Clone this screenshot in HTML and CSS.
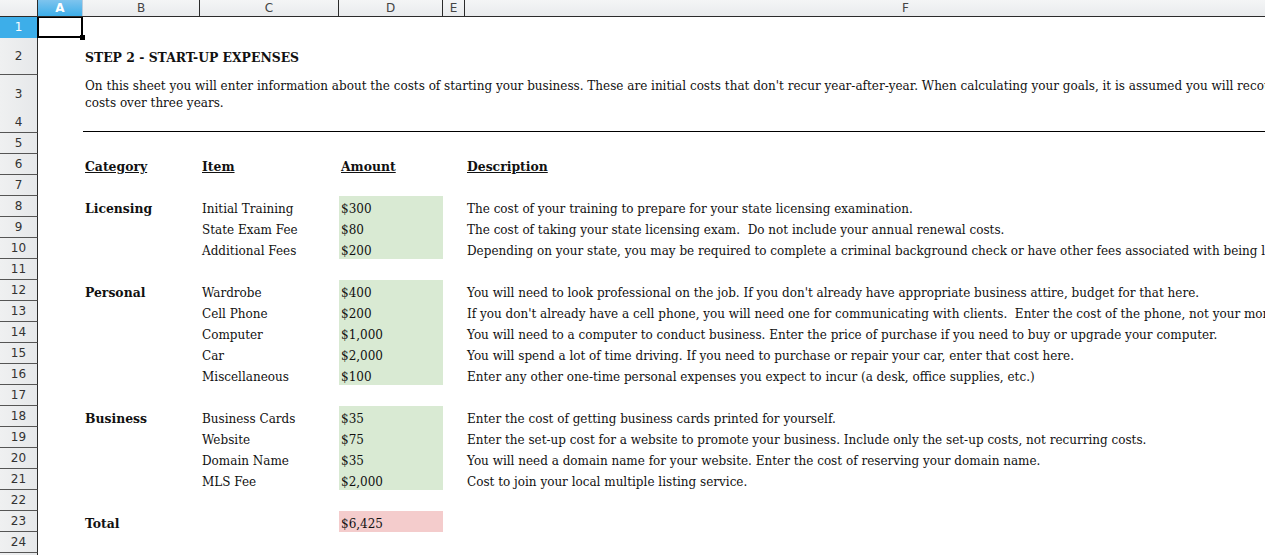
FILE: index.html
```html
<!DOCTYPE html>
<html lang="en">
<head>
    <meta charset="UTF-8">
    <title>Step 2 - Start-up Expenses</title>
    <link rel="stylesheet" href="styles.css">
</head>
<body>
    <div class="sheet">
        <div class="row col-heads">
            <div class="corner"></div>
            <div class="col-head selected">A</div>
            <div class="col-head">B</div>
            <div class="col-head">C</div>
            <div class="col-head">D</div>
            <div class="col-head">E</div>
            <div class="col-head left">F</div>
        </div>

        <div class="row">
            <div class="row-head selected">1</div>
            <div class="cell active"><span class="handle"></span></div>
        </div>

        <div class="row tall">
            <div class="row-head">2</div>
            <div class="cell"></div>
            <div class="cell span title">STEP 2 - START-UP EXPENSES</div>
        </div>

        <div class="row tall">
            <div class="row-head">3</div>
            <div class="cell"></div>
            <div class="cell span intro">On this sheet you will enter information about the costs of starting your business. These are initial costs that don't recur year-after-year. When calculating your goals, it is assumed you will recoup these<br>costs over three years.</div>
        </div>

        <div class="row">
            <div class="row-head">4</div>
            <div class="cell"></div>
            <div class="cell span rule"></div>
        </div>

        <div class="row"><div class="row-head">5</div></div>

        <div class="row">
            <div class="row-head">6</div>
            <div class="cell"></div>
            <div class="cell heading">Category</div>
            <div class="cell heading">Item</div>
            <div class="cell heading">Amount</div>
            <div class="cell"></div>
            <div class="cell heading">Description</div>
        </div>

        <div class="row"><div class="row-head">7</div></div>

        <div class="row">
            <div class="row-head">8</div>
            <div class="cell"></div>
            <div class="cell cat">Licensing</div>
            <div class="cell">Initial Training</div>
            <div class="cell amount">$300</div>
            <div class="cell"></div>
            <div class="cell">The cost of your training to prepare for your state licensing examination.</div>
        </div>
        <div class="row">
            <div class="row-head">9</div>
            <div class="cell"></div>
            <div class="cell"></div>
            <div class="cell">State Exam Fee</div>
            <div class="cell amount">$80</div>
            <div class="cell"></div>
            <div class="cell">The cost of taking your state licensing exam.&nbsp; Do not include your annual renewal costs.</div>
        </div>
        <div class="row">
            <div class="row-head">10</div>
            <div class="cell"></div>
            <div class="cell"></div>
            <div class="cell">Additional Fees</div>
            <div class="cell amount">$200</div>
            <div class="cell"></div>
            <div class="cell">Depending on your state, you may be required to complete a criminal background check or have other fees associated with being licensed.</div>
        </div>

        <div class="row"><div class="row-head">11</div></div>

        <div class="row">
            <div class="row-head">12</div>
            <div class="cell"></div>
            <div class="cell cat">Personal</div>
            <div class="cell">Wardrobe</div>
            <div class="cell amount">$400</div>
            <div class="cell"></div>
            <div class="cell">You will need to look professional on the job. If you don't already have appropriate business attire, budget for that here.</div>
        </div>
        <div class="row">
            <div class="row-head">13</div>
            <div class="cell"></div>
            <div class="cell"></div>
            <div class="cell">Cell Phone</div>
            <div class="cell amount">$200</div>
            <div class="cell"></div>
            <div class="cell">If you don't already have a cell phone, you will need one for communicating with clients.&nbsp; Enter the cost of the phone, not your monthly bill.</div>
        </div>
        <div class="row">
            <div class="row-head">14</div>
            <div class="cell"></div>
            <div class="cell"></div>
            <div class="cell">Computer</div>
            <div class="cell amount">$1,000</div>
            <div class="cell"></div>
            <div class="cell">You will need to a computer to conduct business. Enter the price of purchase if you need to buy or upgrade your computer.</div>
        </div>
        <div class="row">
            <div class="row-head">15</div>
            <div class="cell"></div>
            <div class="cell"></div>
            <div class="cell">Car</div>
            <div class="cell amount">$2,000</div>
            <div class="cell"></div>
            <div class="cell">You will spend a lot of time driving. If you need to purchase or repair your car, enter that cost here.</div>
        </div>
        <div class="row">
            <div class="row-head">16</div>
            <div class="cell"></div>
            <div class="cell"></div>
            <div class="cell">Miscellaneous</div>
            <div class="cell amount">$100</div>
            <div class="cell"></div>
            <div class="cell">Enter any other one-time personal expenses you expect to incur (a desk, office supplies, etc.)</div>
        </div>

        <div class="row"><div class="row-head">17</div></div>

        <div class="row">
            <div class="row-head">18</div>
            <div class="cell"></div>
            <div class="cell cat">Business</div>
            <div class="cell">Business Cards</div>
            <div class="cell amount">$35</div>
            <div class="cell"></div>
            <div class="cell">Enter the cost of getting business cards printed for yourself.</div>
        </div>
        <div class="row">
            <div class="row-head">19</div>
            <div class="cell"></div>
            <div class="cell"></div>
            <div class="cell">Website</div>
            <div class="cell amount">$75</div>
            <div class="cell"></div>
            <div class="cell">Enter the set-up cost for a website to promote your business. Include only the set-up costs, not recurring costs.</div>
        </div>
        <div class="row">
            <div class="row-head">20</div>
            <div class="cell"></div>
            <div class="cell"></div>
            <div class="cell">Domain Name</div>
            <div class="cell amount">$35</div>
            <div class="cell"></div>
            <div class="cell">You will need a domain name for your website. Enter the cost of reserving your domain name.</div>
        </div>
        <div class="row">
            <div class="row-head">21</div>
            <div class="cell"></div>
            <div class="cell"></div>
            <div class="cell">MLS Fee</div>
            <div class="cell amount">$2,000</div>
            <div class="cell"></div>
            <div class="cell">Cost to join your local multiple listing service.</div>
        </div>

        <div class="row"><div class="row-head">22</div></div>

        <div class="row">
            <div class="row-head">23</div>
            <div class="cell"></div>
            <div class="cell cat">Total</div>
            <div class="cell"></div>
            <div class="cell amount total">$6,425</div>
        </div>

        <div class="row"><div class="row-head">24</div></div>
        <div class="row"><div class="row-head"></div></div>
    </div>
</body>
</html>
```

FILE: styles.css
```css
* {
    margin: 0;
    padding: 0;
    box-sizing: border-box;
}

html, body {
    width: 1265px;
    height: 555px;
    overflow: hidden;
    background: #fff;
}

body {
    font-family: "DejaVu Serif", serif;
    font-size: 12px;
    color: #111;
}

.row {
    display: grid;
    grid-template-columns: 38px 45px 117px 139px 104px 22px 1000px;
    height: 21px;
}

.row.tall {
    height: 37px;
}

/* column headers */
.col-heads {
    height: 17px;
    border-bottom: 1px solid #2b2b2b;
    background: linear-gradient(#f4f5f6, #e9ebed);
}

.corner {
    border-right: 1px solid #2b2b2b;
}

.col-head {
    font-family: "DejaVu Sans", sans-serif;
    font-size: 12px;
    color: #444;
    text-align: center;
    line-height: 16px;
    border-right: 1px solid #2b2b2b;
}

.col-head.left {
    text-align: left;
    padding-left: 437px;
}

.col-head.selected {
    background: linear-gradient(#7ec4ee, #3daee9);
    color: #fff;
    font-weight: bold;
    border-right: 1px solid #bcd;
}

/* row headers */
.row-head {
    font-family: "DejaVu Sans", sans-serif;
    font-size: 12px;
    color: #333;
    background: linear-gradient(90deg, #eff0f1, #e6e8ea);
    border-right: 1px solid #2b2b2b;
    border-bottom: 1px solid #555;
    display: flex;
    align-items: center;
    justify-content: center;
}

.row-head.selected {
    background: #3daee9;
    color: #fff;
    border-bottom-color: #3daee9;
}

/* cells */
.cell {
    white-space: nowrap;
    display: flex;
    align-items: flex-end;
    padding: 0 0 1px 2px;
    position: relative;
}

.cell.active {
    border: 2px solid #000;
    border-top: 1px solid #000;
    margin-left: -1px;
}

.handle {
    position: absolute;
    right: -4px;
    bottom: -4px;
    width: 5px;
    height: 5px;
    background: #000;
}

.span {
    grid-column: 3 / 8;
}

.title {
    font-weight: bold;
    font-size: 12.4px;
    align-items: center;
    padding-top: 3px;
}

.intro {
    display: block;
    line-height: 17px;
    padding-top: 3px;
}

.rule {
    border-bottom: 1px solid #000;
    margin-bottom: 1px;
}

.heading {
    font-weight: bold;
    text-decoration: underline;
    font-size: 12.4px;
}

.cat {
    font-weight: bold;
    font-size: 12.4px;
}

.amount {
    background: #d9ead3;
}

.amount.total {
    background: #f4cccc;
}
```
